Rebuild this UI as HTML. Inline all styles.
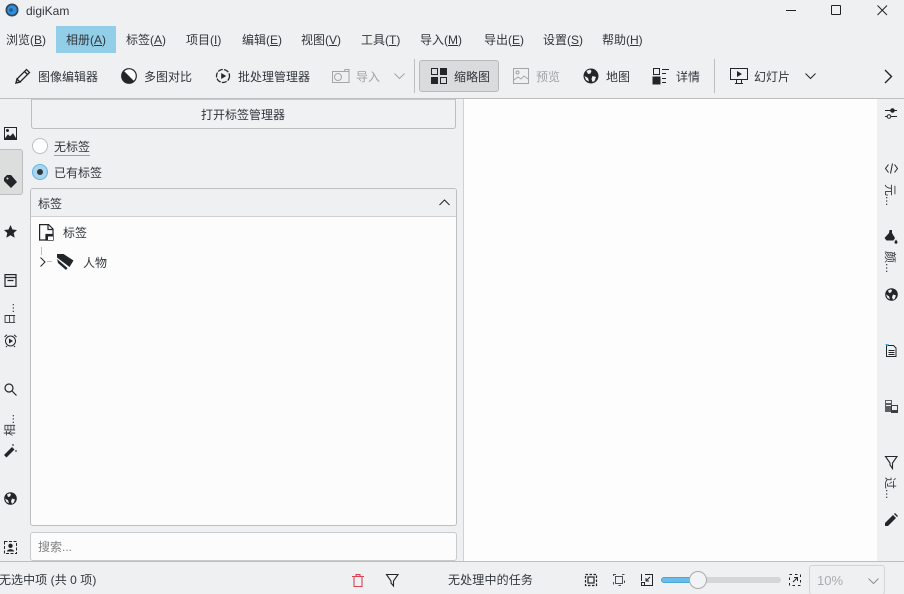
<!DOCTYPE html>
<html><head><meta charset="utf-8"><style>
html,body{margin:0;padding:0;width:904px;height:594px;overflow:hidden;background:#eff0f1;}
body{position:relative;font-family:"Liberation Sans","Noto Sans CJK SC",sans-serif;font-size:12px;color:#31363b;}
.t{position:absolute;white-space:nowrap;line-height:16px;height:16px;}
.g{color:#9fa3a6;}
.b{position:absolute;box-sizing:border-box;}
svg{position:absolute;overflow:visible;}
u{text-underline-offset:1px;text-decoration-thickness:1px;}
.v{position:absolute;writing-mode:vertical-rl;text-orientation:sideways;white-space:nowrap;font-size:12px;line-height:12px;width:12px;}
.l{transform:rotate(180deg);}
</style></head><body>
<!-- title bar -->
<svg style="left:5px;top:3px" width="15" height="15" viewBox="0 0 15 15"><circle cx="7" cy="7" r="6.5" fill="#33475a"/><circle cx="7" cy="7" r="4.8" fill="#2f8fdc"/><circle cx="6" cy="7" r="1.8" fill="#1d5c95"/></svg>
<span class="t" style="left:26px;top:3px;">digiKam</span>
<div class="b" style="left:786px;top:10px;width:10px;height:1px;background:#222"></div>
<div class="b" style="left:831px;top:5px;width:10px;height:10px;border:1px solid #222;border-radius:1px"></div>
<svg style="left:877px;top:5px" width="11" height="11" stroke="#222" fill="none"><path d="M.5.500l9.500 9.500M10 .5L.5 10"/></svg>
<!-- menu -->
<div class="b" style="left:56px;top:26px;width:60px;height:27px;background:#93cee9"></div>
<span class="t" style="left:6px;top:32px">浏览(<u>B</u>)</span>
<span class="t" style="left:66px;top:32px">相册(<u>A</u>)</span>
<span class="t" style="left:126px;top:32px">标签(<u>A</u>)</span>
<span class="t" style="left:186px;top:32px">项目(<u>I</u>)</span>
<span class="t" style="left:242px;top:32px">编辑(<u>E</u>)</span>
<span class="t" style="left:301px;top:32px">视图(<u>V</u>)</span>
<span class="t" style="left:361px;top:32px">工具(<u>T</u>)</span>
<span class="t" style="left:420px;top:32px">导入(<u>M</u>)</span>
<span class="t" style="left:484px;top:32px">导出(<u>E</u>)</span>
<span class="t" style="left:543px;top:32px">设置(<u>S</u>)</span>
<span class="t" style="left:602px;top:32px">帮助(<u>H</u>)</span>
<!-- toolbar -->
<svg style="left:15px;top:68px" width="16" height="16" fill="none" stroke="#232629" stroke-width="1.300"><path d="M1 15l1-4L11.500 1.500l3 3L5 14z"/><path d="M9.500 3.500l3 3M1 15l1-4 3 3z"/></svg>
<span class="t" style="left:38px;top:69px">图像编辑器</span>
<svg style="left:121px;top:68px" width="16" height="16"><circle cx="8" cy="8" r="7.300" fill="#fff" stroke="#232629" stroke-width="1.200"/><path d="M3 3A7.070 7.070 0 0 0 13 13z" fill="#232629"/></svg>
<span class="t" style="left:144px;top:69px">多图对比</span>
<svg style="left:215px;top:68px" width="16" height="16" fill="none" stroke="#232629" stroke-width="1.300"><circle cx="8" cy="8" r="6.500" stroke-dasharray="5 1.300"/><path d="M6.200 5l5 3-5 3z" fill="#232629" stroke="none"/></svg>
<span class="t" style="left:238px;top:69px">批处理管理器</span>
<svg style="left:332px;top:69px" width="18" height="14" fill="none" stroke="#a3a5a7"><rect x=".5" y="2.500" width="16.500" height="11"/><circle cx="6" cy="8" r="3.500"/><path d="M12 2.500l1-2h4v2"/></svg>
<span class="t g" style="left:356px;top:69px">导入</span>
<svg style="left:394px;top:73px" width="11" height="7" fill="none" stroke="#a3a5a7"><path d="M.5.500l5 5 5-5"/></svg>
<div class="b" style="left:414px;top:59px;width:1px;height:34px;background:#bcbec0"></div>
<div class="b" style="left:419px;top:60px;width:80px;height:32px;background:#dadbdc;border:1px solid #b8babc;border-radius:3px"></div>
<svg style="left:431px;top:68px" width="16" height="16"><rect x=".5" y=".5" width="6" height="6" fill="none" stroke="#232629"/><rect x="9" y="0" width="7" height="7" fill="#232629"/><rect x="0" y="9" width="7" height="7" fill="#232629"/><rect x="9.500" y="9.500" width="6" height="6" fill="none" stroke="#232629"/></svg>
<span class="t" style="left:454px;top:69px">缩略图</span>
<svg style="left:513px;top:68px" width="16" height="16" fill="none" stroke="#a3a5a7"><rect x=".5" y=".5" width="15" height="15"/><circle cx="4.500" cy="4.500" r="1.500"/><path d="M1 12l4-3 3 2 3-3 4 3"/></svg>
<span class="t g" style="left:536px;top:69px">预览</span>
<svg style="left:583px;top:68px" width="16" height="16"><circle cx="8" cy="8" r="7.500" fill="#232629"/><path d="M7 1.500L3.500 3 5 6l2.500-.5 1-2.500zM9.500 8l3.500 1-1.500 4-2 1-1-3zM1.500 8L5 10l1 3.500L3 12z" fill="#eff0f1"/></svg>
<span class="t" style="left:606px;top:69px">地图</span>
<svg style="left:653px;top:68px" width="16" height="16" stroke="#232629" fill="none"><rect x=".5" y=".5" width="6" height="6"/><rect x="0" y="9" width="7" height="7" fill="#232629"/><path d="M9 1.500h7M9 5.500h4M9 10.500h4M9 14.500h4"/></svg>
<span class="t" style="left:676px;top:69px">详情</span>
<div class="b" style="left:714px;top:59px;width:1px;height:34px;background:#bcbec0"></div>
<svg style="left:730px;top:68px" width="18" height="16" stroke="#232629" fill="none"><rect x=".5" y=".5" width="17" height="11"/><path d="M7 3l5 3-5 3z" fill="#232629" stroke="none"/><path d="M6.500 12v3M11.500 12v3M5 15.500h8"/></svg>
<span class="t" style="left:754px;top:69px">幻灯片</span>
<svg style="left:805px;top:73px" width="11" height="7" fill="none" stroke="#232629"><path d="M.5.500l5 5 5-5"/></svg>
<svg style="left:884px;top:69px" width="9" height="15" fill="none" stroke="#232629" stroke-width="1.400"><path d="M1 1l6.500 6.500L1 14"/></svg>
<div class="b" style="left:0;top:98px;width:904px;height:1px;background:#bcbec0"></div>
<!-- left sidebar -->
<svg style="left:4px;top:127px" width="13" height="13" stroke="#232629" fill="none"><rect x=".5" y=".5" width="12" height="12"/><circle cx="3.500" cy="3.500" r="1" fill="#232629"/><path d="M1 12l3-4 2 2 3-3 3 5z" fill="#232629"/></svg>
<div class="b" style="left:0;top:149px;width:23px;height:46px;background:#dcdddd;border:1px solid #bcbec0;border-left:0;border-radius:0 3px 3px 0"></div>
<svg style="left:4px;top:175px" width="13" height="13" fill="#232629"><path fill-rule="evenodd" d="M0 3L3 0h4l6 7-6 6-7-7zM3.500 2.500a1 1 0 1 0 .01 0z"/></svg>
<svg style="left:4px;top:225px" width="13" height="13" fill="#232629"><path d="M6.500 0l2 4.500 4.500.5-3.300 3 1 4.800-4.200-2.500-4.200 2.500 1-4.800L0 5l4.500-.5z"/></svg>
<svg style="left:4px;top:274px" width="13" height="13" stroke="#232629" fill="none" stroke-width="1.200"><rect x="1" y=".6" width="11" height="11.800"/><path d="M1 3.500h11M3.500 6.500h6"/></svg>
<div class="v l" style="left:4px;top:303px;">日...</div>
<svg style="left:4px;top:334px" width="13" height="13" stroke="#232629" fill="none"><circle cx="6.500" cy="7" r="5"/><path d="M5 4.500l4 2.500-4 2.500z" fill="#232629" stroke="none"/><path d="M.5 3L3 .8M12.500 3L10 .8M3 12l-1 1M10 12l1 1"/></svg>
<svg style="left:4px;top:383px" width="13" height="13" stroke="#232629" fill="none" stroke-width="1.200"><circle cx="5" cy="5" r="4"/><path d="M8 8l4.500 4.500"/></svg>
<div class="v l" style="left:4px;top:414px;">相...</div>
<svg style="left:4px;top:444px" width="13" height="13" fill="#232629"><path d="M0 11l8-8 2.500 2.500-8 8z"/><path d="M9 0l1 1-1 1-1-1zM12 6l1 1-1 1-1-1z"/></svg>
<svg style="left:4px;top:492px" width="13" height="13"><circle cx="6.500" cy="6.500" r="6.300" fill="#232629"/><path d="M6 1.200L3 2.500 4 5l2-.5 1-2zM8 6.500l3 1-1.300 3.300-1.700 1-1-2.600zM1 6.500L4 8.300l1 3L2.500 10z" fill="#eff0f1"/></svg>
<svg style="left:4px;top:541px" width="13" height="13" stroke="#232629" fill="none"><rect x=".5" y=".5" width="12" height="12" stroke-dasharray="3 1.500"/><circle cx="6.500" cy="4.800" r="1.700" fill="#232629"/><path d="M3 10.500c0-3 7-3 7 0z" fill="#232629" stroke="none"/></svg>
<!-- left panel -->
<div class="b" style="left:31px;top:99px;width:425px;height:30px;background:#f0f1f2;border:1px solid #bcbec0;border-top:1px solid #c8cacc;border-radius:0 0 3px 3px"></div>
<span class="t" style="left:201px;top:107px">打开标签管理器</span>
<div class="b" style="left:32px;top:138px;width:16px;height:16px;border-radius:50%;background:#fff;border:1px solid #bcbec0"></div>
<span class="t" style="left:54px;top:139px;border-bottom:1px solid #5fb2e0;height:16px">无标签</span>
<div class="b" style="left:32px;top:164px;width:16px;height:16px;border-radius:50%;background:#a9d6ef;border:1px solid #5fb2e0"></div>
<div class="b" style="left:37px;top:169px;width:6px;height:6px;border-radius:50%;background:#31363b"></div>
<span class="t" style="left:54px;top:165px">已有标签</span>
<div class="b" style="left:30px;top:188px;width:427px;height:338px;background:#fcfcfc;border:1px solid #bcbec0;border-radius:3px"></div>
<div class="b" style="left:31px;top:189px;width:425px;height:28px;background:#eff0f1;border-bottom:1px solid #cfd1d2;border-radius:2px 2px 0 0"></div>
<span class="t" style="left:38px;top:196px">标签</span>
<svg style="left:439px;top:199px" width="11" height="7" fill="none" stroke="#232629"><path d="M.5 6l5-5 5 5"/></svg>
<svg style="left:39px;top:224px" width="15" height="17" stroke="#232629" fill="none" stroke-width="1.200"><path d="M.6 16V.6h9L14 5v11z"/><path d="M9 .6V5.500h5"/><rect x="7" y="10.500" width="7" height="5.500" fill="#232629" stroke="#232629"/><rect x="9" y="12.500" width="5" height="3.500" fill="#fff" stroke="none"/></svg>
<span class="t" style="left:63px;top:225px">标签</span>
<div class="b" style="left:41px;top:247px;width:1px;height:8px;background:#bcbec0"></div>
<div class="b" style="left:47px;top:261px;width:5px;height:1px;background:#bcbec0"></div>
<svg style="left:40px;top:257px" width="6" height="10" fill="none" stroke="#232629"><path d="M.5.500l4.500 4.500L.5 9.500"/></svg>
<svg style="left:57px;top:254px" width="17" height="16" fill="#232629"><path d="M0 3.500V0h6.500L16.500 6.500 12.500 13z"/><path d="M0 5L10.500 14l-1.500 2L1 9z"/></svg>
<span class="t" style="left:83px;top:255px">人物</span>
<div class="b" style="left:30px;top:532px;width:427px;height:29px;background:#fcfcfc;border:1px solid #c8cacc;border-radius:3px"></div>
<span class="t" style="left:38px;top:539px;color:#7f8285">搜索...</span>
<div class="b" style="left:463px;top:99px;width:1px;height:462px;background:#cfd1d2"></div>
<!-- center -->
<div class="b" style="left:464px;top:99px;width:413px;height:462px;background:#fdfdfd"></div>
<!-- right sidebar -->
<svg style="left:884px;top:107px" width="14" height="13" stroke="#232629" fill="none"><path d="M1 3.500h12M1 9.500h12"/><circle cx="8.500" cy="3.500" r="1.800" fill="#232629"/><circle cx="5" cy="9.500" r="1.800" fill="#eff0f1"/></svg>
<svg style="left:885px;top:162px" width="13" height="13" stroke="#232629" fill="none"><path d="M3.500 2.500L.5 6.500l3 4M9.500 2.500l3 4-3 4M7.500 1.500l-2 10"/></svg>
<div class="v" style="left:884px;top:184px;">元...</div>
<svg style="left:884px;top:230px" width="14" height="14" fill="#232629"><path d="M5.500 0h2.500v3l3 5-1.500 2.500H2.500L.5 8 5 3z"/><path d="M12 9.500c1 1.500 1.500 2 1.500 2.700a1.500 1.500 0 0 1-3 0c0-.7.500-1.200 1.500-2.700z"/></svg>
<div class="v" style="left:884px;top:251px;">颜...</div>
<svg style="left:885px;top:288px" width="13" height="13"><circle cx="6.500" cy="6.500" r="6.300" fill="#232629"/><path d="M6 1.200L3 2.500 4 5l2-.5 1-2zM8 6.500l3 1-1.300 3.300-1.700 1-1-2.600zM1 6.500L4 8.300l1 3L2.500 10z" fill="#eff0f1"/></svg>
<svg style="left:885px;top:344px" width="13" height="13" fill="none" stroke="#232629"><path d="M1.500 1.500h7l2.500 2.500v8.500h-9.500z"/><path d="M3.500 6.500h6M3.500 8.500h6M3.500 10.500h6"/><path d="M0 0h4l-1.500 2.500z" fill="#3daee9" stroke="none"/></svg>
<svg style="left:885px;top:400px" width="13" height="13" fill="#5d6063"><rect x="0" y="0" width="7" height="12"/><rect x="1" y="1" width="5" height="2" fill="#eff0f1"/><rect x="1" y="5" width="5" height="1" fill="#eff0f1"/><rect x="6" y="5" width="7" height="8" fill="#3c3f42"/><rect x="7" y="6" width="5" height="4" fill="#eff0f1"/></svg>
<svg style="left:885px;top:456px" width="13" height="13" fill="none" stroke="#232629" stroke-width="1.100"><path d="M.5.500h11.500L7.500 7v5.500L5 9V7z"/></svg>
<div class="v" style="left:884px;top:477px;">过...</div>
<svg style="left:885px;top:513px" width="13" height="13" fill="#232629"><path d="M0 10l8-8 3 3-8 8H0z"/><path d="M9 1l1-1 3 3-1 1z"/></svg>
<!-- status bar -->
<div class="b" style="left:0;top:561px;width:904px;height:1px;background:#bcbec0"></div>
<span class="t" style="left:-1px;top:572px;letter-spacing:.06px">无选中项 (共 0 项)</span>
<svg style="left:352px;top:574px" width="12" height="13" fill="none" stroke="#da4453" stroke-width="1.100"><path d="M0 2.500h12M4 2.500V.6h4v1.900M2 2.500v10h8v-10"/></svg>
<svg style="left:386px;top:574px" width="13" height="13" fill="none" stroke="#232629" stroke-width="1.100"><path d="M.5.500h11.500L7.500 7v5L5 9V7z"/></svg>
<span class="t" style="left:448px;top:572px;letter-spacing:.15px">无处理中的任务</span>
<svg style="left:585px;top:574px" width="12" height="12" fill="none" stroke="#232629" stroke-width="1.200"><rect x=".5" y=".5" width="11" height="11" stroke-dasharray="2.500 1.500"/><rect x="3" y="3" width="6" height="6"/></svg>
<svg style="left:613px;top:574px" width="12" height="12" fill="none" stroke="#4d5054"><rect x=".5" y=".5" width="11" height="11" stroke-dasharray="2.500 6"/><rect x="2.500" y="2.500" width="7" height="7"/></svg>
<svg style="left:641px;top:574px" width="12" height="12" fill="none" stroke="#232629"><path d="M4 .5h7.500V11.500H4M.5 0v7"/><path d="M9 3L5 7M5 4v3h3"/><rect x=".5" y="8.500" width="3" height="3"/></svg>
<div class="b" style="left:661px;top:577px;width:120px;height:6px;background:#d5d6d7;border-radius:3px"></div>
<div class="b" style="left:661px;top:577px;width:32px;height:6px;background:#6cbcea;border:1px solid #4aa6dc;border-radius:3px 0 0 3px"></div>
<div class="b" style="left:689px;top:571px;width:18px;height:18px;border-radius:50%;background:#f2f3f4;border:1px solid #a9abad"></div>
<svg style="left:789px;top:574px" width="12" height="12" fill="none" stroke="#232629"><rect x=".5" y=".5" width="11" height="11" stroke-dasharray="2.500 3"/><path d="M4 8l4-4M5 3.500h3.500V7"/></svg>
<div class="b" style="left:809px;top:565px;width:76px;height:30px;border:1px solid #d3d5d6;border-radius:3px"></div>
<span class="t" style="left:817px;top:573px;color:#a9acae;font-size:13px">10%</span>
<svg style="left:868px;top:578px" width="11" height="7" fill="none" stroke="#8d9093"><path d="M.5.500l5 5 5-5"/></svg>
</body></html>
